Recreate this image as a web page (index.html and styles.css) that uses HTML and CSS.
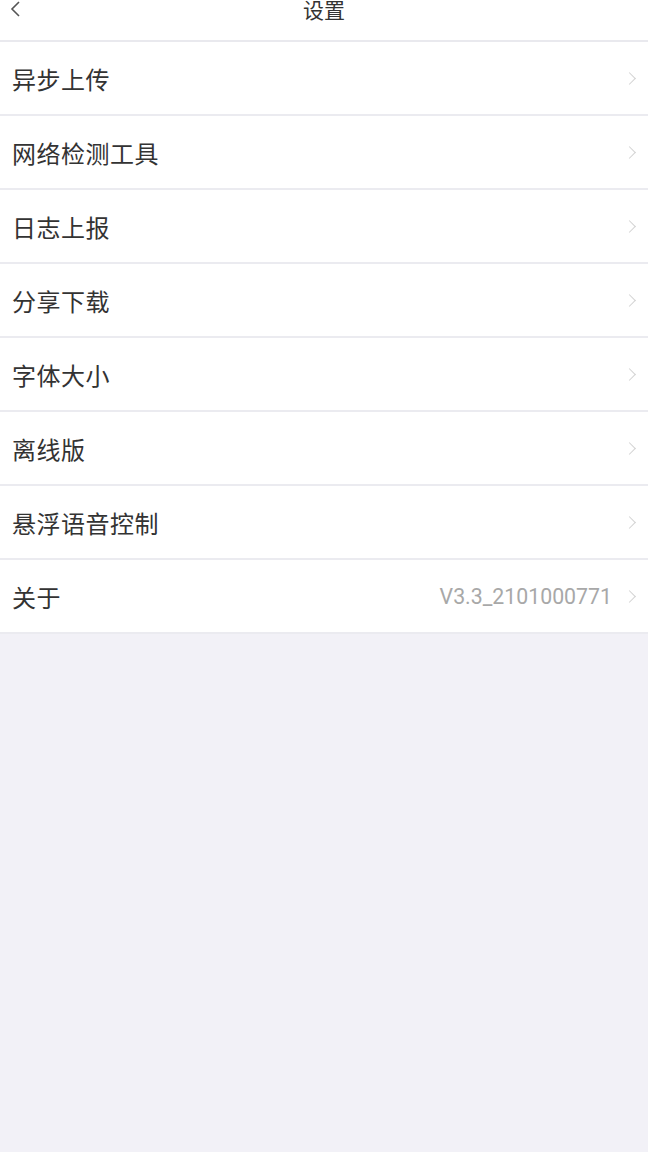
FILE: index.html
```html
<!DOCTYPE html>
<html lang="zh">
<head>
<meta charset="utf-8">
<title>设置</title>
<link rel="stylesheet" href="styles.css">
</head>
<body>
<header class="topbar">
  <span class="back">
    <svg width="12" height="18" viewBox="0 0 12 18"><polyline points="10,2 3,9 10,16" fill="none" stroke="#555" stroke-width="1.6"/></svg>
  </span>
  <span class="title">设置</span>
</header>
<ul class="list">
  <li class="row"><span class="label">异步上传</span><span class="chev"></span></li>
  <li class="row"><span class="label">网络检测工具</span><span class="chev"></span></li>
  <li class="row"><span class="label">日志上报</span><span class="chev"></span></li>
  <li class="row"><span class="label">分享下载</span><span class="chev"></span></li>
  <li class="row"><span class="label">字体大小</span><span class="chev"></span></li>
  <li class="row"><span class="label">离线版</span><span class="chev"></span></li>
  <li class="row"><span class="label">悬浮语音控制</span><span class="chev"></span></li>
  <li class="row"><span class="label">关于</span><span class="value">V3.3_2101000771</span><span class="chev"></span></li>
</ul>
</body>
</html>
```
FILE: styles.css
```css
html, body {
  margin: 0;
  padding: 0;
  background: #f2f1f7;
  font-family: "Noto Sans CJK SC", "Noto Sans", sans-serif;
  height: 100%;
}
.topbar {
  position: relative;
  height: 40px;
  background: #ffffff;
  border-bottom: 2px solid #e9e9ee;
  display: flex;
  justify-content: center;
  align-items: flex-start;
}
.title {
  font-size: 21px;
  line-height: 18px;
  color: #333333;
}
.back {
  position: absolute;
  left: 9px;
  top: 0;
  display: flex;
}
.list {
  list-style: none;
  margin: 0;
  padding: 0;
  background: #ffffff;
}
.row {
  height: 72px;
  display: flex;
  align-items: center;
  padding: 0 12px;
  border-bottom: 2px solid #ebebf0;
}
.label {
  flex: 1;
  font-size: 24px;
  color: #333333;
  letter-spacing: 0.5px;
}
.value {
  font-family: Roboto, "Liberation Sans", sans-serif;
  font-size: 21.3px;
  color: #a8a8a8;
  margin-right: 13px;
}
.chev {
  width: 8px;
  height: 8px;
  border-top: 1.5px solid #d2d2d2;
  border-right: 1.5px solid #d2d2d2;
  transform: rotate(45deg);
  margin-right: 2px;
}
```
